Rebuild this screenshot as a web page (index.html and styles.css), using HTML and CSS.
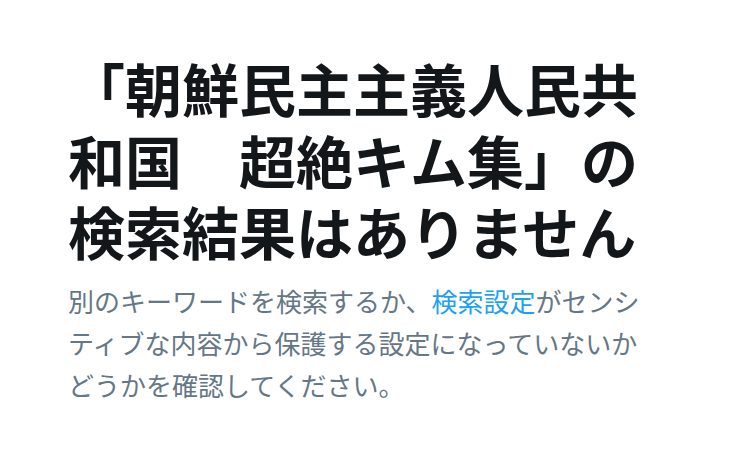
FILE: index.html
```html
<!DOCTYPE html>
<html lang="ja">
<head>
<meta charset="utf-8">
<link rel="stylesheet" href="styles.css">
</head>
<body>
<div class="empty">
  <h1 class="title">「朝鮮民主主義人民共和国　超絶キム集」の検索結果はありません</h1>
  <p class="desc">別のキーワードを検索するか、<a class="link" href="#">検索設定</a>がセンシティブな内容から保護する設定になっていないかどうかを確認してください。</p>
</div>
</body>
</html>
```

FILE: styles.css
```css
html, body {
  margin: 0;
  padding: 0;
  background: #ffffff;
}
.empty {
  width: 580px;
  padding: 52px 0 0 68px;
  font-family: "Noto Sans CJK JP", "Noto Sans", sans-serif;
}
.title {
  margin: 0;
  font-size: 57px;
  line-height: 71.5px;
  font-weight: 700;
  color: #14171a;
}
.desc {
  margin: 13px 0 0 0;
  font-size: 26px;
  line-height: 42px;
  font-weight: 400;
  color: #657786;
}
.link {
  color: #1da1f2;
  text-decoration: none;
}
```
